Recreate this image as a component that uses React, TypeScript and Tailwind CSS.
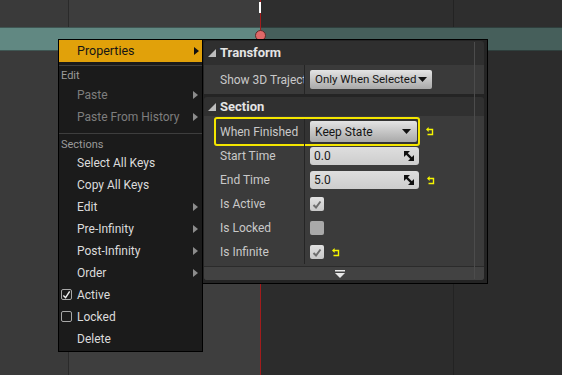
import React from "react";

const FONT = { fontFamily: "Roboto, 'Noto Sans', sans-serif" };

function Arrow({ dark }: { dark?: boolean }) {
  return (
    <svg width="5" height="8" viewBox="0 0 5 8" className="ml-auto mr-[3px]">
      <path d="M0 0 L5 4 L0 8 Z" fill={dark ? "#111" : "#8c8c8c"} />
    </svg>
  );
}

function MenuCheck({ on }: { on?: boolean }) {
  return (
    <div className="absolute left-[2px] top-[5px] w-[11px] h-[11px] rounded-[2px] border border-[#a8a8a8] flex items-center justify-center">
      {on && (
        <svg width="10" height="10" viewBox="0 0 10 10">
          <path d="M1.5 5.5 L4 8 L8.5 1" stroke="#eee" strokeWidth="1.6" fill="none" />
        </svg>
      )}
    </div>
  );
}

function MenuItem({
  label,
  sub,
  disabled,
  check,
}: {
  label: string;
  sub?: boolean;
  disabled?: boolean;
  check?: "on" | "off";
}) {
  return (
    <div className="relative h-[22px] flex items-center pl-[18px] pr-[1px]">
      {check && <MenuCheck on={check === "on"} />}
      <span className={`text-[12px] ${disabled ? "text-[#7e7e7e]" : "text-[#dcdcdc]"}`}>{label}</span>
      {sub && <Arrow />}
    </div>
  );
}

function ResetIcon() {
  return (
    <svg width="8" height="9" viewBox="0 0 8 9">
      <path d="M2 2.5 H6.5 V7.5 H1.5" stroke="#f5f500" strokeWidth="1.4" fill="none" />
      <path d="M0 2.5 L2.6 0 V5 Z" fill="#f5f500" />
    </svg>
  );
}

function SpinIcon() {
  return (
    <svg width="10" height="10" viewBox="0 0 10 10">
      <path d="M0 0 H6 L0 6 Z" fill="#111" />
      <path d="M10 10 H4 L10 4 Z" fill="#111" />
      <path d="M1 1 L9 9" stroke="#111" strokeWidth="2.4" />
    </svg>
  );
}

function Caret() {
  return (
    <svg width="9" height="5" viewBox="0 0 9 5" className="flex-none">
      <path d="M0 0 H9 L4.5 5 Z" fill="#111" />
    </svg>
  );
}

function Tri() {
  return (
    <svg width="8" height="8" viewBox="0 0 8 8" className="mr-[4px]">
      <path d="M8 0 V8 H0 Z" fill="#bdbdbd" />
    </svg>
  );
}

function Check({ on, dim }: { on?: boolean; dim?: boolean }) {
  return (
    <div
      className={`w-[14px] h-[14px] rounded-[2px] flex items-center justify-center ${
        dim ? "bg-[#a9a9a9]" : "bg-gradient-to-b from-[#e2e2e2] to-[#c8c8c8]"
      }`}
    >
      {on && (
        <svg width="10" height="9" viewBox="0 0 10 9">
          <path d="M1.5 5 L4 7.5 L8.5 1.5" stroke="#6e6e6e" strokeWidth="2" fill="none" />
        </svg>
      )}
    </div>
  );
}

function NumBox({ value }: { value: string }) {
  return (
    <div className="w-[109px] h-[18px] rounded-[3px] bg-gradient-to-b from-[#dedede] to-[#cdcdcd] flex items-center pl-[4px] pr-[5px]">
      <span className="text-[12px] text-[#1a1a1a]">{value}</span>
      <span className="ml-auto flex">
        <SpinIcon />
      </span>
    </div>
  );
}

function Row({ label, children, extra }: { label: string; children: React.ReactNode; extra?: React.ReactNode }) {
  return (
    <div className="h-[24px] flex items-center">
      <div className="w-[101px] h-full flex items-center pl-[16px] border-r border-[#252525] text-[12px] text-[#c9c9c9]">
        {label}
      </div>
      <div className="flex items-center pl-[5px] gap-[8px]">
        {children}
        {extra}
      </div>
    </div>
  );
}

export default function App() {
  return (
    <div className="relative w-[562px] h-[375px] overflow-hidden flex bg-[#2c2c2c]" style={FONT}>
      {/* timeline background */}
      <div className="w-[69px] flex flex-col">
        <div className="h-[27px] bg-[#3a3a3a] border-r border-[#2a2a2a]" />
        <div className="h-[24px] bg-[#618882] border-y border-[#3f5653]" />
        <div className="flex-1 bg-[#3a3a3a] border-r border-[#2a2a2a]" />
      </div>
      <div className="w-[191px] flex flex-col">
        <div className="h-[27px] bg-[#3d3d3d]" />
        <div className="h-[24px] bg-[#618882] border-y border-[#3f5653]" />
        <div className="flex-1 bg-[#3e3e3e]" />
      </div>
      <div className="w-[194px] flex flex-col">
        <div className="h-[27px] bg-[#2e2e2e] border-r border-[#232323]" />
        <div className="h-[24px] bg-[#465f5b] border-y border-[#2f3f3d]" />
        <div className="flex-1 bg-[#2c2c2c] border-r border-[#232323]" />
      </div>
      <div className="flex-1 flex flex-col">
        <div className="h-[27px] bg-[#2e2e2e]" />
        <div className="h-[24px] bg-[#465f5b] border-y border-[#2f3f3d]" />
        <div className="flex-1 bg-[#2c2c2c]" />
      </div>

      {/* playhead */}
      <div className="absolute left-[260px] top-0 w-px h-full bg-[#a21c1c]" />
      <div className="absolute left-[259px] top-[2px] w-[2px] h-[11px] bg-white" />
      <div className="absolute left-[255px] top-[30px] w-[11px] h-[11px] rounded-full bg-[#e06868] border border-[#5a2a2a]" />

      {/* context menu */}
      <div className="absolute left-[58px] top-[39px] w-[145px] h-[313px] bg-[#1b1b1b] border border-black">
        <div className="h-[22px] bg-[#e1a10a] flex items-center pl-[18px]">
          <span className="text-[12.5px] text-[#151515]">Properties</span>
          <Arrow dark />
        </div>
        <div className="h-[7px] flex items-center">
          <div className="w-full h-px bg-[#3e3e3e]" />
        </div>
        <div className="h-[15px] flex items-center pl-[2px] text-[11px] text-[#9a9a9a]">Edit</div>
        <MenuItem label="Paste" sub disabled />
        <MenuItem label="Paste From History" sub disabled />
        <div className="h-[10px] flex items-center">
          <div className="w-full h-px bg-[#3e3e3e]" />
        </div>
        <div className="h-[14px] flex items-center pl-[2px] text-[11px] text-[#9a9a9a]">Sections</div>
        <MenuItem label="Select All Keys" />
        <MenuItem label="Copy All Keys" />
        <MenuItem label="Edit" sub />
        <MenuItem label="Pre-Infinity" sub />
        <MenuItem label="Post-Infinity" sub />
        <MenuItem label="Order" sub />
        <MenuItem label="Active" check="on" />
        <MenuItem label="Locked" check="off" />
        <MenuItem label="Delete" />
      </div>

      {/* details panel */}
      <div className="absolute left-[202px] top-[39px] w-[286px] h-[245px] bg-[#242424] border border-black p-[1px] pr-[3px] pb-[3px] flex">
        <div className="flex-1 flex flex-col rounded-[3px] overflow-hidden">
          <div className="h-[24px] bg-[#2f2f2f] flex items-center pl-[4px] text-[13px] font-bold text-[#e4e4e4]">
            <Tri />
            Transform
          </div>
          <div className="h-[29px] bg-[#3a3a3a] flex items-center">
            <div className="w-[101px] h-full flex items-center pl-[16px] border-r border-[#252525] text-[12px] text-[#c9c9c9] whitespace-nowrap overflow-hidden">
              Show 3D Traject
            </div>
            <div className="pl-[5px]">
              <div className="w-[122px] h-[19px] rounded-[2px] bg-gradient-to-b from-[#e4e4e4] to-[#a9a9a9] flex items-center pl-[5px] gap-[2px] whitespace-nowrap">
                <span className="text-[11.5px] text-[#151515]">Only When Selected</span>
                <Caret />
              </div>
            </div>
          </div>
          <div className="h-[3px]" />
          <div className="h-[19px] bg-[#303030] flex items-center pl-[4px] text-[13px] font-bold text-[#e4e4e4] rounded-t-[3px]">
            <Tri />
            Section
          </div>
          <div className="flex-1 bg-[#3b3b3b] flex flex-col">
            <div className="h-[28px] flex items-start">
              <div className="ml-[10px] mt-[1px] w-[206px] h-[29px] rounded-[3px] border-2 border-[#f4e600] bg-[#333333] flex items-center">
                <div className="w-[89px] h-full flex items-center pl-[4px] border-r border-[#252525] text-[12px] text-[#c9c9c9]">
                  When Finished
                </div>
                <div className="pl-[5px]">
                  <div className="w-[107px] h-[21px] rounded-[2px] bg-gradient-to-b from-[#e4e4e4] to-[#a9a9a9] flex items-center pl-[5px] pr-[6px]">
                    <span className="text-[12px] text-[#151515]">Keep State</span>
                    <span className="ml-auto flex">
                      <Caret />
                    </span>
                  </div>
                </div>
              </div>
              <div className="ml-[6px] mt-[11px] flex">
                <ResetIcon />
              </div>
            </div>
            <Row label="Start Time">
              <NumBox value="0.0" />
            </Row>
            <Row label="End Time" extra={<ResetIcon />}>
              <NumBox value="5.0" />
            </Row>
            <Row label="Is Active">
              <Check on />
            </Row>
            <Row label="Is Locked">
              <Check dim />
            </Row>
            <Row label="Is Infinite" extra={<ResetIcon />}>
              <Check on />
            </Row>
            <div className="mt-auto h-[14px] bg-[#424242] border-t border-[#2b2b2b] flex items-center justify-center pr-[9px]">
              <svg width="10" height="8" viewBox="0 0 10 8">
                <rect x="0" y="0" width="10" height="1.5" fill="#e8e8e8" />
                <path d="M0 3 H10 L5 8 Z" fill="#e8e8e8" />
              </svg>
            </div>
          </div>
        </div>
        {/* scrollbar edge */}
        <div className="absolute left-[271px] top-[2px] bottom-[4px] w-px bg-[#4c4c4c]" />
      </div>
    </div>
  );
}
